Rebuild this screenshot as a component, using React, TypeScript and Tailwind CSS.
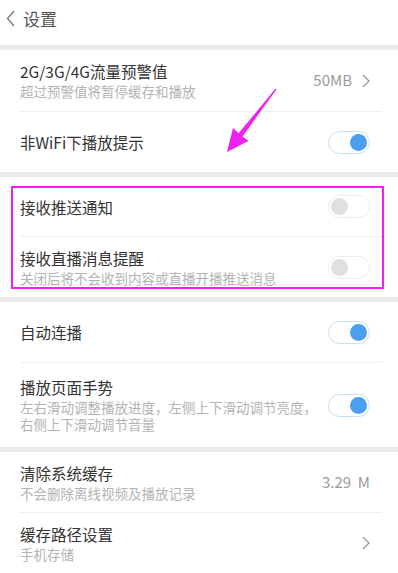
import React from 'react';

const Toggle: React.FC<{ on?: boolean }> = ({ on }) => (
    <div
        className={`w-[42px] h-[23px] rounded-full border flex items-center px-[2px] shrink-0 ${
            on ? 'border-[#c6dff4] justify-end' : 'border-[#ececec] justify-start'
        }`}
    >
        <div className={`w-[17px] h-[17px] rounded-full ${on ? 'bg-[#4a9ff0]' : 'bg-[#e0e0e0]'}`} />
    </div>
);

const Chevron: React.FC = () => (
    <svg width="8" height="14" viewBox="0 0 8 14" fill="none" className="shrink-0">
        <path d="M1 1l6 6-6 6" stroke="#9a9a9a" strokeWidth="1.3" />
    </svg>
);

type RowProps = {
    title: string;
    sub?: React.ReactNode;
    right?: React.ReactNode;
    h: string;
};

const Row: React.FC<RowProps> = ({ title, sub, right, h }) => (
    <div className={`flex items-center justify-between pl-5 pr-[28px] ${h}`}>
        <div className="flex flex-col">
            <div className="text-[15.5px] leading-[20px] text-[#333]">{title}</div>
            {sub && <div className="text-[13.5px] leading-[17px] text-[#b3b3b3] mt-[2px]">{sub}</div>}
        </div>
        {right}
    </div>
);

const Divider: React.FC = () => <div className="h-px bg-[#eeeeee] ml-5 mr-4" />;
const Gap: React.FC = () => <div className="h-[5px] bg-[#ececec]" />;

const Value: React.FC<{ children: React.ReactNode }> = ({ children }) => (
    <div className="flex items-center gap-[10px] text-[15px] text-[#9a9a9a]">{children}</div>
);

export default function App() {
    return (
        <div
            className="relative w-[398px] h-[573px] overflow-hidden bg-white"
            style={{ fontFamily: '"Noto Sans CJK SC", "Noto Sans", sans-serif' }}
        >
            {/* header */}
            <div className="h-[45px] flex items-start pt-[7px] pl-[6px] gap-[8px]">
                <svg width="9" height="17" viewBox="0 0 9 17" fill="none" className="mt-[3px]">
                    <path d="M8 1L1.5 8.5 8 16" stroke="#777" strokeWidth="1.3" />
                </svg>
                <span className="text-[17px] leading-[24px] text-[#555]">设置</span>
            </div>
            <Gap />

            <Row
                h="h-[61px]"
                title="2G/3G/4G流量预警值"
                sub="超过预警值将暂停缓存和播放"
                right={
                    <Value>
                        50MB
                        <Chevron />
                    </Value>
                }
            />
            <Divider />
            <Row h="h-[60px]" title="非WiFi下播放提示" right={<Toggle on />} />
            <Gap />

            <Row h="h-[59px]" title="接收推送通知" right={<Toggle />} />
            <Divider />
            <Row h="h-[60px]" title="接收直播消息提醒" sub="关闭后将不会收到内容或直播开播推送消息" right={<Toggle />} />
            <Gap />

            <Row h="h-[60px]" title="自动连播" right={<Toggle on />} />
            <Divider />
            <Row
                h="h-[84px]"
                title="播放页面手势"
                sub={
                    <>
                        左右滑动调整播放进度，左侧上下滑动调节亮度，
                        <br />
                        右侧上下滑动调节音量
                    </>
                }
                right={<Toggle on />}
            />
            <Gap />

            <Row h="h-[60px]" title="清除系统缓存" sub="不会删除离线视频及播放记录" right={<Value>3.29&nbsp;&nbsp;M</Value>} />
            <Divider />
            <Row h="h-[60px]" title="缓存路径设置" sub="手机存储" right={<Chevron />} />
            <Divider />

            {/* annotation box */}
            <div className="absolute left-[11px] top-[186px] w-[373px] h-[103px] border-2 border-[#f020f0] pointer-events-none" />

            {/* annotation arrow */}
            <svg className="absolute left-0 top-0 pointer-events-none" width="398" height="573" viewBox="0 0 398 573">
                <polygon
                    points="276.4,89.4 242.6,136.4 248.5,141 227,152 233,128 238.6,133.2 275.6,88.6"
                    fill="#ee22ee"
                />
            </svg>
        </div>
    );
}
